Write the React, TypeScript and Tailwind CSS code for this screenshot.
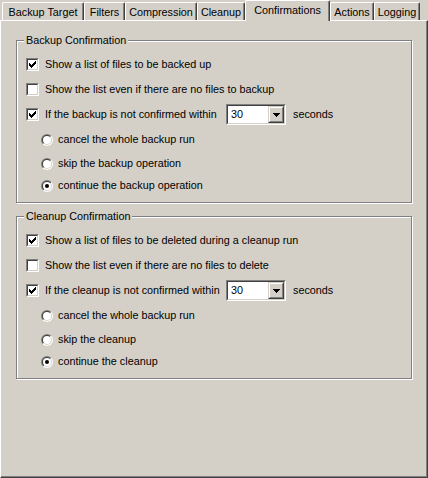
import type { ReactNode } from 'react';

const tabs = [
  { label: 'Backup Target', width: 'w-[82px]' },
  { label: 'Filters', width: 'w-[41px]' },
  { label: 'Compression', width: 'w-[72px]' },
  { label: 'Cleanup', width: 'w-[48px]' },
  { label: 'Confirmations', width: 'w-[85px]', active: true },
  { label: 'Actions', width: 'w-[44px]' },
  { label: 'Logging', width: 'w-[46px]' },
];

// classic 7x7 check glyph, one 3px column per x
const checkCols = [2, 3, 4, 3, 2, 1, 0];

function Checkbox({ checked }: { checked?: boolean }) {
  return (
    <div className="w-[13px] h-[13px] shrink-0 border border-t-[#808080] border-l-[#808080] border-r-white border-b-white">
      <div className="w-full h-full bg-white border border-t-[#404040] border-l-[#404040] border-r-[#d4d0c8] border-b-[#d4d0c8] relative">
        {checked && (
          <svg
            width="7"
            height="7"
            viewBox="0 0 7 7"
            shapeRendering="crispEdges"
            className="absolute left-[1px] top-[1px]"
          >
            {checkCols.map((y, x) => (
              <rect key={x} x={x} y={y} width="1" height="3" fill="#000" />
            ))}
          </svg>
        )}
      </div>
    </div>
  );
}

function Radio({ checked }: { checked?: boolean }) {
  return (
    <svg width="12" height="12" viewBox="0 0 12 12" className="shrink-0">
      <defs>
        <linearGradient id="rOuter" x1="0" y1="0" x2="1" y2="1">
          <stop offset="0.5" stopColor="#808080" />
          <stop offset="0.5" stopColor="#ffffff" />
        </linearGradient>
        <linearGradient id="rInner" x1="0" y1="0" x2="1" y2="1">
          <stop offset="0.5" stopColor="#404040" />
          <stop offset="0.5" stopColor="#d4d0c8" />
        </linearGradient>
      </defs>
      <circle cx="6" cy="6" r="6" fill="url(#rOuter)" />
      <circle cx="6" cy="6" r="5" fill="url(#rInner)" />
      <circle cx="6" cy="6" r="4" fill="#fff" />
      {checked && <circle cx="6" cy="6" r="2" fill="#000" />}
    </svg>
  );
}

function Combo({ value }: { value: string }) {
  return (
    <div className="w-[60px] h-[21px] border border-t-[#808080] border-l-[#808080] border-r-white border-b-white">
      <div className="w-full h-full bg-white border border-t-[#404040] border-l-[#404040] border-r-[#d4d0c8] border-b-[#d4d0c8] flex">
        <span className="flex-1 pl-[3px] leading-[17px]">{value}</span>
        <div className="w-[16px] h-[17px] bg-[#d4d0c8] border border-t-[#d4d0c8] border-l-[#d4d0c8] border-r-[#404040] border-b-[#404040]">
          <div className="w-full h-full border border-t-white border-l-white border-r-[#808080] border-b-[#808080] flex items-center justify-center">
            <svg width="7" height="4" viewBox="0 0 7 4" shapeRendering="crispEdges">
              <path d="M0 0h7v1h-1v1h-1v1h-1v1h-1v-1h-1v-1h-1v-1h-1z" fill="#000" />
            </svg>
          </div>
        </div>
      </div>
    </div>
  );
}

function CheckRow({
  checked,
  label,
  h,
  children,
}: {
  checked?: boolean;
  label: string;
  h: string;
  children?: ReactNode;
}) {
  return (
    <div className={`flex items-center ${h}`}>
      <Checkbox checked={checked} />
      {children ? (
        <>
          <span className="w-[187px] pl-[6px]">{label}</span>
          {children}
        </>
      ) : (
        <span className="pl-[6px]">{label}</span>
      )}
    </div>
  );
}

function RadioRow({ checked, label, h }: { checked?: boolean; label: string; h: string }) {
  return (
    <div className={`flex items-center pl-[15px] ${h}`}>
      <Radio checked={checked} />
      <span className="pl-[5px]">{label}</span>
    </div>
  );
}

function GroupBox({ title, className, children }: { title: string; className?: string; children: ReactNode }) {
  return (
    <div
      className={`relative w-[396px] h-[163px] border border-[#808080] shadow-[inset_1px_1px_0_#ffffff,1px_1px_0_#ffffff] pl-[9px] pt-[11px] ${className ?? ''}`}
    >
      <span className="absolute left-[7px] -top-[8px] px-[2px] bg-[#d4d0c8] leading-[14px]">{title}</span>
      {children}
    </div>
  );
}

function ConfirmGroup({
  title,
  listLabel,
  emptyLabel,
  timeoutLabel,
  skipLabel,
  continueLabel,
  className,
}: {
  title: string;
  listLabel: string;
  emptyLabel: string;
  timeoutLabel: string;
  skipLabel: string;
  continueLabel: string;
  className?: string;
}) {
  return (
    <GroupBox title={title} className={className}>
      <CheckRow checked label={listLabel} h="h-[25px]" />
      <CheckRow label={emptyLabel} h="h-[25px]" />
      <CheckRow checked label={timeoutLabel} h="h-[25px]">
        <Combo value="30" />
        <span className="pl-[7px]">seconds</span>
      </CheckRow>
      <RadioRow label="cancel the whole backup run" h="h-[25px]" />
      <RadioRow label={skipLabel} h="h-[23px]" />
      <RadioRow checked label={continueLabel} h="h-[21px]" />
    </GroupBox>
  );
}

export default function App() {
  return (
    <div className="w-[428px] h-[478px] bg-[#d4d0c8] text-black text-[10.8px] font-['Liberation_Sans',Arial,sans-serif] overflow-hidden">
      <div className="h-[20px] flex items-end pl-[2px]">
        {tabs.map((t) =>
          t.active ? (
            <div
              key={t.label}
              className={`${t.width} h-[21px] -mb-[1px] relative z-10 bg-[#d4d0c8] border-l border-t border-r border-l-white border-t-white border-r-[#404040] shadow-[inset_-1px_0_0_#808080] rounded-tl-[2px] rounded-tr-[2px] flex justify-center pt-[3px] leading-[13px]`}
            >
              {t.label}
            </div>
          ) : (
            <div
              key={t.label}
              className={`${t.width} h-[18px] bg-[#d4d0c8] border-l border-t border-r border-l-white border-t-white border-r-[#404040] shadow-[inset_-1px_0_0_#808080] rounded-tl-[2px] rounded-tr-[2px] flex justify-center pt-[3px] leading-[13px]`}
            >
              {t.label}
            </div>
          )
        )}
      </div>
      <div className="h-[458px] border border-t-white border-l-white border-r-[#404040] border-b-[#404040] shadow-[inset_-1px_-1px_0_#808080] pl-[15px] pt-[19px]">
        <ConfirmGroup
          title="Backup Confirmation"
          listLabel="Show a list of files to be backed up"
          emptyLabel="Show the list even if there are no files to backup"
          timeoutLabel="If the backup is not confirmed within"
          skipLabel="skip the backup operation"
          continueLabel="continue the backup operation"
        />
        <ConfirmGroup
          className="mt-[13px]"
          title="Cleanup Confirmation"
          listLabel="Show a list of files to be deleted during a cleanup run"
          emptyLabel="Show the list even if there are no files to delete"
          timeoutLabel="If the cleanup is not confirmed within"
          skipLabel="skip the cleanup"
          continueLabel="continue the cleanup"
        />
      </div>
    </div>
  );
}
